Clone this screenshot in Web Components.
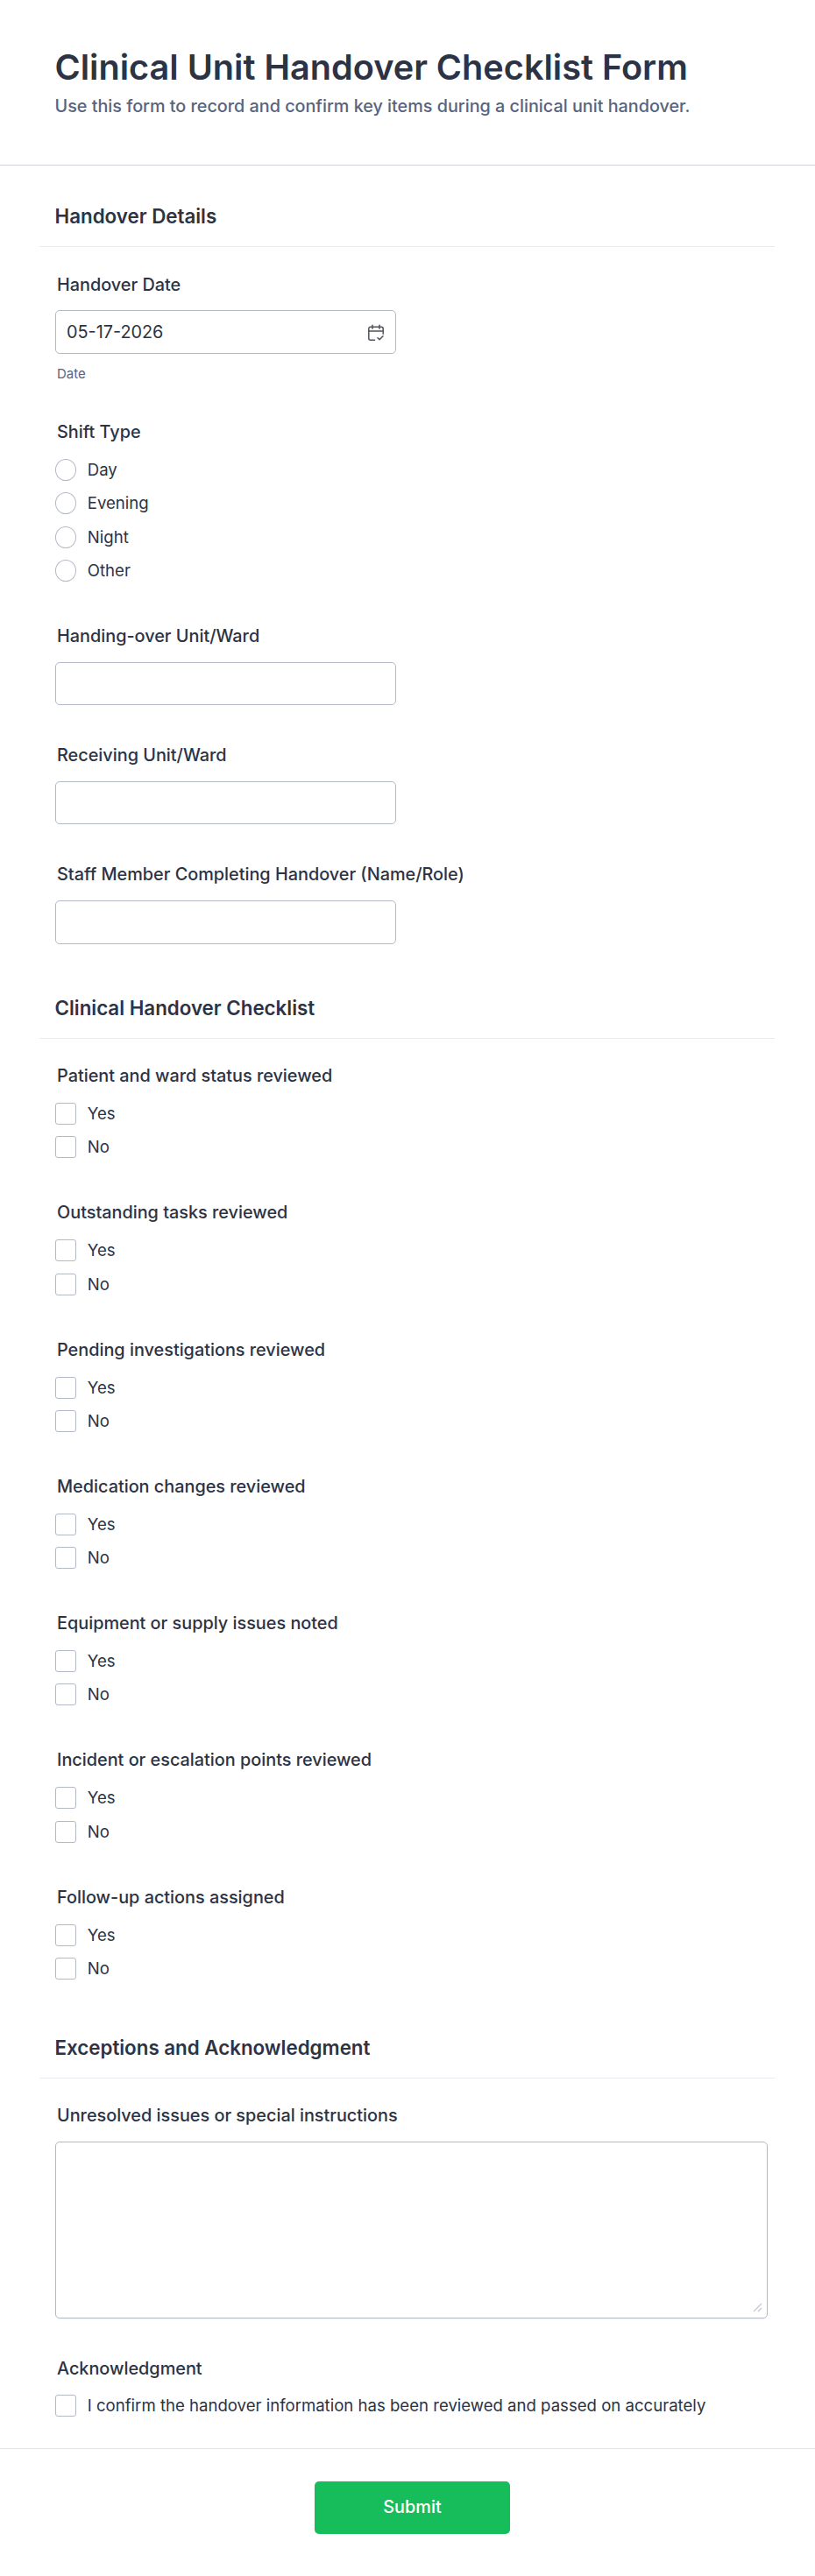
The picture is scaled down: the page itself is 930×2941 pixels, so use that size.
<!DOCTYPE html>
<html lang="en">
<head>
<meta charset="utf-8">
<title>Clinical Unit Handover Checklist Form</title>
<style>
body{margin:0;background:#fff;color:#2c3345;font-family:Inter,"Liberation Sans",sans-serif;font-size:19.84px;line-height:25px}
</style>
</head>
<body>
<handover-form></handover-form>
<script>
const define=(name,css,html,setup)=>{
  const t=document.createElement('template');
  t.innerHTML=`<style>*{box-sizing:border-box}:host([hidden]){display:none}${css}</style>${html}`;
  customElements.define(name,class extends HTMLElement{
    constructor(){
      super();
      this.attachShadow({mode:'open'}).append(t.content.cloneNode(true));
    }
    connectedCallback(){ if(setup) setup(this,this.shadowRoot); }
  });
};

define('form-header',`
:host{display:block;box-sizing:border-box;height:189px;padding:51.5px 62.5px 0;border-bottom:1px solid #d0d3dd}
h1{margin:0;font-size:39.65px;line-height:50px;font-weight:600;color:#2c3345}
p{margin:7px 0 0;font-size:19.78px;font-weight:500;color:#57647e}`,
`<h1><slot></slot></h1><p><slot name="sub"></slot></p>`);

define('section-heading',`
:host{display:block;box-sizing:border-box;margin:14.5px 46px 0 45px;height:79px}
h2{margin:0;height:49.5px;padding:.5px 0 0 17.5px;font-size:22.33px;line-height:28px;font-weight:600;border-bottom:1px solid #e8eaf0}`,
`<h2><slot></slot></h2>`);

define('form-field',`
:host{display:block;box-sizing:border-box;padding:0 0 0 63px;height:136.25px}
:host([kind=date]){height:168.25px}
:host([kind=radio]){height:233px}
:host([kind=check]){height:156.25px}
:host([kind=area]){height:288px}
:host([kind=ack]){height:104.5px}
.l{padding:1px 0 0 2px;font-weight:500;height:25px;white-space:nowrap}
.b{padding-top:17.8px}
:host([kind=radio]) .b,:host([kind=check]) .b,:host([kind=ack]) .b{padding-top:19px;display:grid;grid-auto-rows:38.4px}
:host([kind=ack]) .l{padding-top:1.5px}`,
`<div class="l"></div><div class="b"><slot></slot></div>`,
(h,r)=>{r.querySelector('.l').textContent=h.getAttribute('label')});

define('text-box',`
:host{display:flex;align-items:center;justify-content:space-between;box-sizing:border-box;width:389px;height:49.5px;padding:1px 12.5px 0 12px;border:1px solid #b4b9c8;border-radius:5px}
:host([multiline]){width:813px;height:202px;align-items:flex-end;justify-content:flex-end;padding:0 5px 6px 0;box-shadow:0 1px 2px #2c334510}`,
`<slot></slot>`);

define('calendar-icon',`:host{display:block;width:20px;height:20px}svg{display:block}`,
`<svg width="20" height="20" viewBox="0 0 20 20" fill="none" stroke="#51505c" stroke-width="1.5" stroke-linecap="round" stroke-linejoin="round"><path d="M8.5 18.2H3.8a2 2 0 0 1-2-2V5.2a2 2 0 0 1 2-2h12.4a2 2 0 0 1 2 2v6M1.8 8h16.4M6 1.3v4M14 1.3v4M12 15.8l2 2 4-4"/></svg>`);

define('resize-grip',`:host{display:block;width:11px;height:11px}svg{display:block}`,
`<svg width="11" height="11" viewBox="0 0 11 11" stroke="#c4c8d3" stroke-width="1.3"><path d="M1 10 10 1M6 10l4-4"/></svg>`);

define('choice-item',`
:host{display:flex;gap:12.4px;height:25px;font-size:18.58px;line-height:25px}
i{flex:none;width:24.4px;height:25px;border:1px solid #b4b9c8;border-radius:3px}
:host([round]) i{border-radius:50%}`,
`<i></i><span><slot></slot></span>`);

define('sub-label',`:host{display:block;padding:14.5px 0 0 2px;font-size:14.95px;line-height:18px;color:#57647e}`,`<slot></slot>`);

define('submit-bar',`
:host{display:flex;box-sizing:border-box;justify-content:center;height:146px;padding:37px 0 0 11px;border-top:1px solid #e3e5ee}
button{width:223px;height:60px;border:0;border-radius:5px;background:#18bd5b;color:#fff;font:500 19.84px/25px Inter,"Liberation Sans",sans-serif;padding:0}`,
`<button type="button"><slot></slot></button>`);

const checks=['Patient and ward status reviewed','Outstanding tasks reviewed','Pending investigations reviewed','Medication changes reviewed','Equipment or supply issues noted','Incident or escalation points reviewed','Follow-up actions assigned']
 .map(l=>`<form-field kind="check" label="${l}"><choice-item>Yes</choice-item><choice-item>No</choice-item></form-field>`).join('');

define('handover-form',`:host{display:flex;flex-direction:column}.first{margin-top:43.5px}`,
`<form-header>Clinical Unit Handover Checklist Form<span slot="sub">Use this form to record and confirm key items during a clinical unit handover.</span></form-header>
<section-heading class="first">Handover Details</section-heading>
<form-field kind="date" label="Handover Date"><text-box><span>05-17-2026</span><calendar-icon></calendar-icon></text-box><sub-label>Date</sub-label></form-field>
<form-field kind="radio" label="Shift Type"><choice-item round>Day</choice-item><choice-item round>Evening</choice-item><choice-item round>Night</choice-item><choice-item round>Other</choice-item></form-field>
<form-field label="Handing-over Unit/Ward"><text-box></text-box></form-field>
<form-field label="Receiving Unit/Ward"><text-box></text-box></form-field>
<form-field label="Staff Member Completing Handover (Name/Role)"><text-box></text-box></form-field>
<section-heading>Clinical Handover Checklist</section-heading>
${checks}
<section-heading>Exceptions and Acknowledgment</section-heading>
<form-field kind="area" label="Unresolved issues or special instructions"><text-box multiline><resize-grip></resize-grip></text-box></form-field>
<form-field kind="ack" label="Acknowledgment"><choice-item>I confirm the handover information has been reviewed and passed on accurately</choice-item></form-field>
<submit-bar>Submit</submit-bar>`);
</script>
</body>
</html>
